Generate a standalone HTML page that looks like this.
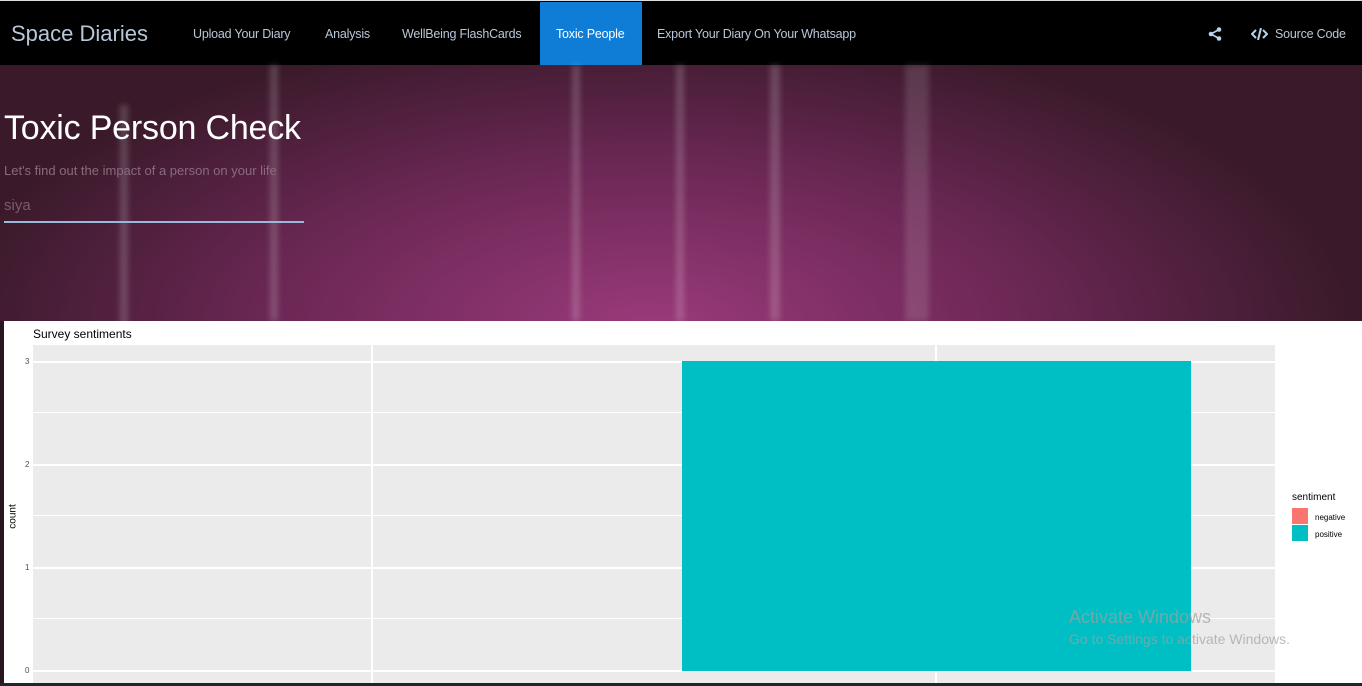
<!DOCTYPE html>
<html><head><style>
*{margin:0;padding:0;box-sizing:border-box}
body{width:1362px;height:686px;overflow:hidden;font-family:"Liberation Sans",sans-serif;background:#2a1620;position:relative}
.nav{position:absolute;left:0;top:0;width:1362px;height:65px;background:#000;border-top:1px solid #ddd}
.nav span{position:absolute;top:26px;font-size:12.5px;color:#b8c7d8;letter-spacing:-0.2px}
.brand{left:11px;top:20px!important;font-size:22px!important;color:#b8c7d8!important;letter-spacing:0!important}
.act{position:absolute;left:540px;top:1px;width:102px;height:64px;background:#0f7cd6}
.hero{position:absolute;left:0;top:65px;width:1362px;height:256px;background:radial-gradient(ellipse 700px 300px at 650px 260px,#9a3a7a,#6a2754 55%,#3a1a2a 100%)}
.streak{position:absolute;top:0;height:256px;background:rgba(255,255,255,.18);filter:blur(3px)}
h1{position:absolute;left:4px;top:44px;font-size:34px;color:#fff;font-weight:normal;letter-spacing:-0.2px}
.sub{position:absolute;left:4px;top:98px;font-size:13px;color:#8a6a7e}
.inp{position:absolute;left:4px;top:132px;font-size:15px;color:#7a5a6e}
.line{position:absolute;left:4px;top:156px;width:300px;height:2px;background:#9ab8dc}
.chart{position:absolute;left:4px;top:321px;width:1358px;height:362px;background:#fff}
.bottom{position:absolute;left:0;top:683px;width:1362px;height:3px;background:#1e2530}
.panel{position:absolute;left:33px;top:345px;width:1242px;height:338px;background:#ebebeb}
.h{position:absolute;left:0;width:1242px;background:#fff}
.v{position:absolute;top:0;height:338px;width:2px;background:#fff}
.t{position:absolute;font-size:8px;color:#4d4d4d;left:21px}
</style></head><body>
<div class="nav">
<div class="act"></div>
<span class="brand">Space Diaries</span>
<span style="left:193px">Upload Your Diary</span>
<span style="left:325px">Analysis</span>
<span style="left:402px">WellBeing FlashCards</span>
<span style="left:556px;color:#fff">Toxic People</span>
<span style="left:657px">Export Your Diary On Your Whatsapp</span>
<svg style="position:absolute;left:1208px;top:26px" width="14" height="14" viewBox="0 0 14 14"><circle cx="11" cy="2.5" r="2.3" fill="#b8d4ec"/><circle cx="3" cy="7" r="2.3" fill="#b8d4ec"/><circle cx="11" cy="11.5" r="2.3" fill="#b8d4ec"/><path d="M11 2.5L3 7L11 11.5" stroke="#b8d4ec" stroke-width="1.6" fill="none"/></svg>
<svg style="position:absolute;left:1251px;top:27px" width="17" height="12" viewBox="0 0 17 12"><path d="M5 2L1 6L5 10M12 2L16 6L12 10M10 0L7 12" stroke="#b8d4ec" stroke-width="2" fill="none"/></svg>
<span style="left:1275px">Source Code</span>
</div>
<div class="hero">
<div class="streak" style="left:120px;width:8px;top:40px"></div>
<div class="streak" style="left:270px;width:8px"></div>
<div class="streak" style="left:572px;width:8px"></div>
<div class="streak" style="left:676px;width:8px"></div>
<div class="streak" style="left:770px;width:10px"></div>
<div class="streak" style="left:905px;width:24px;background:rgba(255,255,255,.13)"></div>
<h1>Toxic Person Check</h1>
<div class="sub">Let's find out the impact of a person on your life</div>
<div class="inp">siya</div>
<div class="line"></div>
</div>
<div class="chart">
<div style="position:absolute;left:29px;top:6px;font-size:12px;color:#000">Survey sentiments</div>
<div style="position:absolute;left:-3px;top:190px;font-size:10px;transform:rotate(-90deg)">count</div>
<div class="t" style="top:345px">0</div>
<div class="t" style="top:242px">1</div>
<div class="t" style="top:139px">2</div>
<div class="t" style="top:36px">3</div>
<div style="position:absolute;left:1288px;top:171px;font-size:10px">sentiment</div>
<div style="position:absolute;left:1288px;top:187px;width:16px;height:16px;background:#f8766d"></div>
<div style="position:absolute;left:1288px;top:204px;width:16px;height:16px;background:#00bfc4"></div>
<div style="position:absolute;left:1311px;top:192px;font-size:8px">negative</div>
<div style="position:absolute;left:1311px;top:209px;font-size:8px">positive</div>
</div>
<div class="panel">
<div class="h" style="top:67px;height:1px"></div><div class="h" style="top:170px;height:1px"></div><div class="h" style="top:273px;height:1px"></div>
<div class="h" style="top:16px;height:2px"></div><div class="h" style="top:119px;height:2px"></div><div class="h" style="top:222px;height:2px"></div><div class="h" style="top:325px;height:2px"></div>
<div class="v" style="left:338px"></div><div class="v" style="left:902px"></div>
<div style="position:absolute;left:649px;top:16px;width:509px;height:310px;background:#00bfc4"></div>
</div>
<div style="position:absolute;left:1069px;top:607px;font-size:18px;color:rgba(160,160,160,.7)">Activate Windows</div>
<div style="position:absolute;left:1069px;top:631px;font-size:14px;color:rgba(160,160,160,.7)">Go to Settings to activate Windows.</div>
<div class="bottom"></div>
</body></html>
